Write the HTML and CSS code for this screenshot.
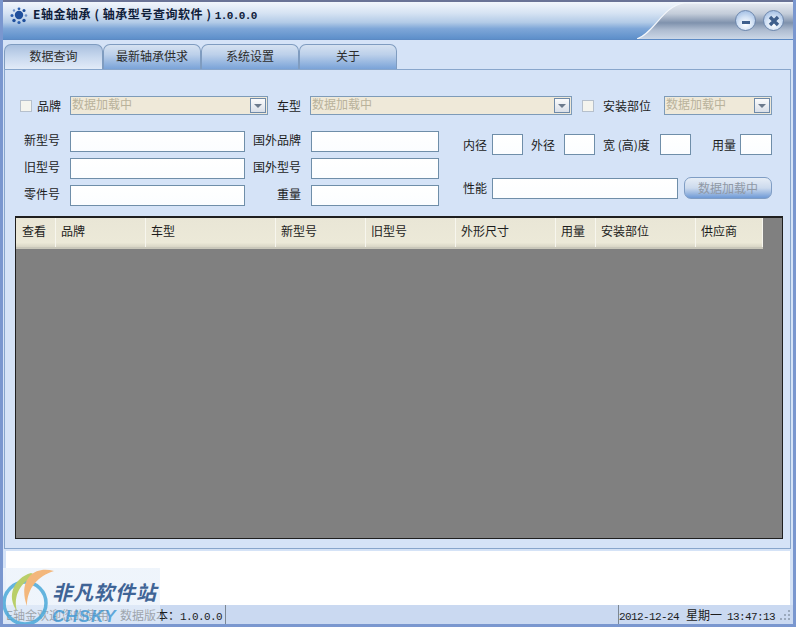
FILE: index.html
```html
<!DOCTYPE html>
<html lang="zh">
<head>
<meta charset="utf-8">
<title>轴金轴承</title>
<link rel="stylesheet" href="styles.css">
</head>
<body>
<div class="window">
  <header class="titlebar">
    <svg class="titlebar-cap" width="156" height="37" viewBox="0 0 156 37">
      <defs>
        <linearGradient id="capFill" x1="0" y1="0" x2="0" y2="1">
          <stop offset="0" stop-color="#e6eaf1"/>
          <stop offset=".3" stop-color="#c3ccd9"/>
          <stop offset=".55" stop-color="#7f92ad"/>
          <stop offset=".75" stop-color="#aebcd0"/>
          <stop offset="1" stop-color="#cbd7e7"/>
        </linearGradient>
      </defs>
      <path d="M0 37 C18 30 26 4 47 1 L156 1 L156 37 Z" fill="url(#capFill)"/>
      <path d="M0 37 C18 30 26 4 47 1 L156 1" fill="none" stroke="#f4f7fb" stroke-width="1.2"/>
    </svg>
    <svg class="app-icon" width="18" height="18" viewBox="0 0 18 18">
      <circle cx="9" cy="8" r="4.2" fill="#1f4f9c"/>
      <circle cx="9" cy="1.8" r="1.4" fill="#2c5fae"/>
      <circle cx="14" cy="3.5" r="1.5" fill="#1f4f9c"/>
      <circle cx="16" cy="8.5" r="1.3" fill="#6c90c8"/>
      <circle cx="14" cy="13.5" r="1.7" fill="#1f4f9c"/>
      <circle cx="9" cy="15.5" r="1.6" fill="#2c5fae"/>
      <circle cx="4" cy="13.5" r="1.7" fill="#1f4f9c"/>
      <circle cx="2" cy="8.5" r="1.5" fill="#2c5fae"/>
      <circle cx="4" cy="3.5" r="1.2" fill="#6c90c8"/>
    </svg>
    <h1 class="app-title">E轴金轴承 ( 轴承型号查询软件 ) <span class="mono">1.0.0.0</span></h1>
    <div class="window-buttons">
      <button class="round-btn"><svg width="10" height="10" viewBox="0 0 10 10"><rect x="1" y="5" width="8" height="3" fill="#3f5f8c"/></svg></button>
      <button class="round-btn"><svg width="12" height="12" viewBox="0 0 12 12"><path d="M2 2 L10 10 M10 2 L2 10" stroke="#3f5f8c" stroke-width="3.4"/></svg></button>
    </div>
  </header>

  <nav class="tabs">
    <div class="tab active">数据查询</div>
    <div class="tab">最新轴承供求</div>
    <div class="tab">系统设置</div>
    <div class="tab">关于</div>
  </nav>

  <main class="panel">
    <div class="filter-row">
      <span class="check"></span>
      <label class="lbl brand-lbl">品牌</label>
      <div class="combo w-brand"><span>数据加载中</span><i class="arrow"></i></div>
      <label class="lbl car-lbl">车型</label>
      <div class="combo w-car"><span>数据加载中</span><i class="arrow"></i></div>
      <span class="check check-pos"></span>
      <label class="lbl pos-lbl">安装部位</label>
      <div class="combo w-pos"><span>数据加载中</span><i class="arrow"></i></div>
    </div>

    <div class="search">
      <div class="search-left">
        <label class="lbl">新型号</label><input class="field">
        <label class="lbl">国外品牌</label><input class="field">
        <label class="lbl">旧型号</label><input class="field">
        <label class="lbl">国外型号</label><input class="field">
        <label class="lbl">零件号</label><input class="field">
        <label class="lbl">重量</label><input class="field">
      </div>
      <div class="search-right">
        <div class="size-row">
          <label class="lbl s1">内径</label><input class="field small">
          <label class="lbl s2">外径</label><input class="field small">
          <label class="lbl s3">宽 (高)度</label><input class="field small">
          <label class="lbl s4">用量</label><input class="field small last">
        </div>
        <div class="perf-row">
          <label class="lbl s1">性能</label><input class="field perf">
          <button class="load-btn">数据加载中</button>
        </div>
      </div>
    </div>

    <section class="grid">
      <div class="grid-head">
        <div class="col c-view">查看</div>
        <div class="col c90">品牌</div>
        <div class="col c130">车型</div>
        <div class="col c90">新型号</div>
        <div class="col c90">旧型号</div>
        <div class="col c100">外形尺寸</div>
        <div class="col c40">用量</div>
        <div class="col c100">安装部位</div>
        <div class="col c67">供应商</div>
      </div>
    </section>
  </main>

  <div class="log"></div>

  <footer class="statusbar">
    <div class="st-msg">E轴金欢迎您的使用<span class="st-version">数据版本：<span class="mono">1.0.0.0</span></span></div>
    <div class="st-time"><span class="mono">2012-12-24</span><span class="st-day">星期一</span><span class="mono">13:47:13</span></div>
    <svg class="grip" width="12" height="12" viewBox="0 0 12 12" fill="#9aa9bd">
      <rect x="9" y="1" width="2" height="2"/><rect x="5" y="5" width="2" height="2"/><rect x="9" y="5" width="2" height="2"/>
      <rect x="1" y="9" width="2" height="2"/><rect x="5" y="9" width="2" height="2"/><rect x="9" y="9" width="2" height="2"/>
    </svg>
  </footer>

  <!-- site stamp laid over the lower-left corner -->
  <div class="stamp">
    <svg class="stamp-logo" width="62" height="59" viewBox="0 0 62 59">
      <circle cx="25" cy="35" r="21" fill="none" stroke="#4aa8d8" stroke-width="3.5" opacity=".85"/>
      <path d="M31 5 C14 10 6 28 17 43 C13 28 20 14 36 7 Z" fill="#b9cf6a"/>
      <path d="M54 3 C32 -3 18 14 27 38 C27 20 38 8 54 3 Z" fill="#f3b77c"/>
    </svg>
    <div class="stamp-cn">非凡软件站</div>
    <div class="stamp-en">CHSKY</div>
  </div>
</div>
</body>
</html>
```
FILE: styles.css
```css
* { box-sizing: border-box; }
html, body { margin: 0; padding: 0; }
body {
  width: 796px;
  height: 627px;
  overflow: hidden;
  font: 12px/1 "Noto Sans CJK SC", "Liberation Sans", sans-serif;
  color: #1c1c1c;
}

.window {
  position: relative;
  width: 796px;
  height: 627px;
  display: flex;
  flex-direction: column;
  background: #d5e3f7;
  border-left: 3px solid #7a97cf;
  border-right: 3px solid #7a97cf;
  border-bottom: 3px solid #7a97cf;
  overflow: hidden;
}

.mono {
  font-family: "Liberation Mono", monospace;
  font-size: 11px;
  letter-spacing: -.6px;
}

/* title bar */
.titlebar {
  position: relative;
  height: 40px;
  flex: none;
  display: flex;
  align-items: center;
  padding: 0 9px 12px 7px;
  border-top: 2px solid #6a7396;
  border-bottom: 1px solid #5c8ac4;
  background: linear-gradient(#f2f6fc 0, #d6e3f3 30%, #b3cbe7 55%, #7fa7d8 72%, #5d8fca 100%);
}
.titlebar-cap {
  position: absolute;
  top: 0;
  right: 0;
}
.app-icon { position: relative; flex: none; margin-top: 2px; }
.app-title {
  position: relative;
  margin: 0 0 0 5px;
  font-size: 12px;
  font-weight: 700;
  color: #10203a;
  letter-spacing: .55px;
  white-space: nowrap;
}
.app-title .mono { font-weight: 700; letter-spacing: -.6px; }
.window-buttons {
  position: relative;
  display: flex;
  gap: 7px;
  margin: 12px 0 0 auto;
}
.round-btn {
  width: 21px;
  height: 21px;
  padding: 0;
  display: flex;
  align-items: center;
  justify-content: center;
  border-radius: 50%;
  border: 1px solid #6d87ad;
  background: radial-gradient(circle at 50% 70%, #fff 0, #d3e2f5 45%, #8fb0dd 100%);
}

/* tabs */
.tabs {
  flex: none;
  height: 29px;
  display: flex;
  align-items: flex-end;
  padding-left: 1px;
}
.tab {
  width: 98px;
  height: 25px;
  padding-bottom: 2px;
  display: flex;
  align-items: center;
  justify-content: center;
  border: 1px solid #7f9cc0;
  border-bottom: 0;
  border-radius: 7px 7px 0 0;
  background: linear-gradient(#d6e2f1 0, #bcd0ea 40%, #7aa3d8 100%);
  color: #2c2c2c;
}
.tab.active {
  width: 99px;
  background: linear-gradient(#a9c0df 0, #c8d8ee 50%, #e2ebf8 100%);
}

/* query panel */
.panel {
  flex: none;
  width: 787px;
  height: 480px;
  margin-left: 1px;
  display: flex;
  flex-direction: column;
  padding: 26px 7px 9px 10px;
  border: 1px solid #88a6cc;
}
.lbl { white-space: nowrap; }

.filter-row {
  height: 19px;
  display: flex;
  align-items: center;
  padding-left: 5px;
}
.check {
  width: 12px;
  height: 12px;
  border: 1px solid #b6c0cc;
  background: #f4f4ee;
}
.brand-lbl { margin-left: 5px; }
.car-lbl { margin-left: 9px; }
.check-pos { margin-left: 10px; }
.pos-lbl { margin-left: 9px; }
.combo {
  height: 19px;
  margin-left: 9px;
  display: flex;
  align-items: center;
  justify-content: space-between;
  padding: 0 1px;
  border: 1px solid #7e9bb8;
  background: #efe9d9;
  color: #b9b29b;
}
.combo span { padding-bottom: 3px; }
.w-brand { width: 198px; }
.w-car { width: 262px; }
.w-pos { width: 108px; margin-left: 13px; }
.arrow {
  position: relative;
  width: 16px;
  height: 15px;
  border: 1px solid #6f8aa8;
  background: linear-gradient(#fbfbfb, #d9dfe8);
}
.arrow::after {
  content: "";
  position: absolute;
  left: 3px;
  top: 5px;
  border: 4px solid transparent;
  border-top: 4px solid #6c7a8c;
  border-bottom: 0;
}

.search {
  display: flex;
  margin-top: 16px;
}
.search-left {
  width: 424px;
  display: grid;
  grid-template-columns: 45px 175px 46px 128px;
  column-gap: 10px;
  row-gap: 6px;
  grid-auto-rows: 21px;
  align-items: center;
  justify-items: end;
}
.search-left .lbl { margin-bottom: 4px; }
.search-left .field { width: 100%; height: 21px; }
.field {
  display: block;
  height: 21px;
  padding: 0;
  border: 1px solid #6f8ea9;
  border-radius: 0;
  background: linear-gradient(#fff, #fbfdff);
  outline: 0;
}
.search-right {
  width: 320px;
  margin-left: 24px;
}
.size-row, .perf-row { display: flex; align-items: center; }
.size-row { padding-top: 3px; }
.perf-row { margin-top: 22px; }
.small { width: 31px; }
.small.last { width: 32px; }
.s1 { width: 29px; }
.s2 { width: 33px; margin-left: 8px; }
.s3 { width: 57px; margin-left: 8px; }
.s4 { width: 28px; margin-left: 21px; }
.perf { width: 186px; }
.load-btn {
  width: 88px;
  height: 22px;
  margin-left: 6px;
  padding: 0;
  border: 1px solid #7f9dc4;
  border-radius: 7px;
  background: linear-gradient(#e6edf6 0, #ccdaed 50%, #6f9ad6 100%);
  color: #8f98a5;
  font: inherit;
}

/* results table */
.grid {
  flex: none;
  height: 323px;
  margin-top: 10px;
  background: #808080;
  border: 1px solid #1f1f1f;
  border-top-width: 2px;
}
.grid-head {
  display: flex;
  width: 747px;
  height: 31px;
  background: linear-gradient(#e9e6d6 0, #ece9d8 85%, #d8d5c5 100%);
  border-bottom: 2px solid #c9c7ba;
}
.col {
  flex: none;
  height: 100%;
  padding: 7px 0 0 5px;
  border-right: 1px solid #f7f6ee;
  white-space: nowrap;
}
.c-view { width: 40px; padding-left: 6px; }
.c40 { width: 40px; }
.c67 { width: 67px; }
.c90 { width: 90px; }
.c100 { width: 100px; }
.c130 { width: 130px; }

/* message area */
.log {
  flex: none;
  width: 784px;
  height: 54px;
  margin: 2px 0 0 3px;
  background: #fff;
}

/* status bar */
.statusbar {
  flex: 1;
  display: flex;
  align-items: center;
  background: #cad9f1;
  position: relative;
}
.st-msg {
  width: 223px;
  height: 100%;
  padding: 4px 0 0 3px;
  border-right: 1px solid #7b8794;
  white-space: nowrap;
}
.st-version { margin-left: 11px; }
.st-time {
  height: 100%;
  margin-left: 392px;
  padding: 4px 0 0 0;
  border-left: 1px solid #7b8794;
  white-space: nowrap;
}
.st-day { margin: 0 5px 0 7px; }
.grip { margin-left: auto; margin-right: 2px; }

/* site stamp */
.stamp {
  position: absolute;
  left: -3px;
  bottom: -3px;
  width: 160px;
  height: 59px;
  background: linear-gradient(rgba(238,244,251,.95), rgba(225,236,249,.55));
}
.stamp-logo { position: absolute; left: 0; top: 0; }
.stamp-cn {
  position: absolute;
  left: 52px;
  top: 14px;
  font-size: 20px;
  font-weight: 700;
  font-style: italic;
  color: #3f6496;
  letter-spacing: 1px;
  white-space: nowrap;
}
.stamp-en {
  position: absolute;
  left: 52px;
  top: 39px;
  font: italic 700 17px "Liberation Sans", sans-serif;
  color: rgba(60,150,210,.8);
  letter-spacing: 1px;
}
```
